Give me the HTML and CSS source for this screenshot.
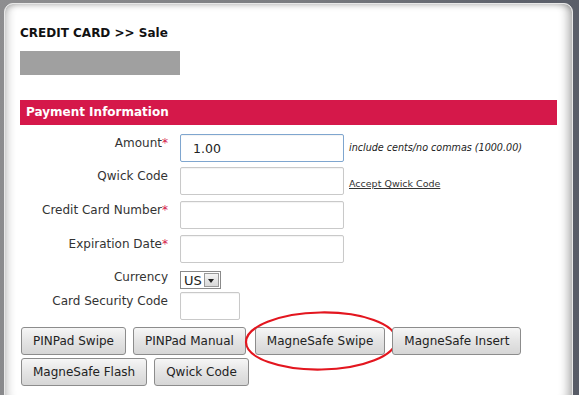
FILE: index.html
```html
<!DOCTYPE html>
<html lang="en">
<head>
    <meta charset="UTF-8">
    <title>Credit Card Sale</title>
    <link rel="stylesheet" href="styles.css">
</head>
<body>

    <div class="card">
        <h1>CREDIT CARD &gt;&gt; Sale</h1>
        <div class="merchant-bar"></div>

        <div class="section-head">Payment Information</div>

        <form class="pay-form">
            <div class="row row-first">
                <label>Amount<span class="req">*</span></label>
                <input type="text" class="field focused" value="1.00">
                <span class="hint">include cents/no commas (1000.00)</span>
            </div>
            <div class="row">
                <label>Qwick Code</label>
                <input type="text" class="field">
                <a href="#" class="hint-link">Accept Qwick Code</a>
            </div>
            <div class="row">
                <label>Credit Card Number<span class="req">*</span></label>
                <input type="text" class="field">
            </div>
            <div class="row">
                <label>Expiration Date<span class="req">*</span></label>
                <input type="text" class="field">
            </div>
            <div class="row row-small">
                <label>Currency</label>
                <div class="select">
                    <span class="select-value">US</span>
                    <span class="select-arrow"></span>
                </div>
            </div>
            <div class="row row-last">
                <label>Card Security Code</label>
                <input type="text" class="field field-short">
            </div>

            <div class="buttons">
                <button type="button">PINPad Swipe</button>
                <button type="button">PINPad Manual</button>
                <button type="button" class="marked">MagneSafe Swipe
                    <svg class="circle" width="156" height="62" viewBox="0 0 156 62">
                        <ellipse cx="78" cy="31" rx="75" ry="28.5" fill="none" stroke="#e3161f" stroke-width="2.2" transform="rotate(-1 78 31)"/>
                    </svg>
                </button>
                <button type="button">MagneSafe Insert</button>
                <button type="button">MagneSafe Flash</button>
                <button type="button">Qwick Code</button>
            </div>
        </form>
    </div>

</body>
</html>
```

FILE: styles.css
```css
* {
    margin: 0;
    padding: 0;
    box-sizing: border-box;
}

body {
    height: 395px;
    overflow: hidden;
    padding: 3px 6px 0 4px;
    background: linear-gradient(100deg, #8e8e90 0%, #7a7c80 45%, #5d616b 80%, #575b66 100%);
    font-family: "DejaVu Sans", Verdana, sans-serif;
    color: #222;
}

.card {
    height: 400px;
    background: #fff;
    border-radius: 9px;
    border: 1px solid #e8e8e8;
    padding: 22px 15px 0 15px;
    box-shadow: inset 0 4px 6px -3px rgba(0, 0, 0, 0.25),
                inset 9px 0 9px -6px rgba(0, 0, 0, 0.2),
                inset -10px 0 10px -6px rgba(0, 0, 0, 0.3);
}

h1 {
    font-size: 12px;
    font-weight: bold;
    color: #111;
    line-height: 15px;
}

.merchant-bar {
    width: 160px;
    height: 24px;
    margin-top: 10px;
    background: #a0a0a0;
}

.section-head {
    margin-top: 25px;
    height: 25px;
    padding: 5px 6px;
    background: #d5184a;
    color: #fff;
    font-size: 12px;
    font-weight: bold;
    line-height: 15px;
}

.pay-form {
    margin-top: 9px;
}

.row {
    display: flex;
    align-items: flex-start;
    height: 28px;
    margin-bottom: 6px;
}

.row-first {
    margin-bottom: 5px;
}

.row label {
    width: 151px;
    padding-top: 2px;
    padding-right: 3px;
    text-align: right;
    font-size: 12px;
    line-height: 15px;
    color: #333;
}

.req {
    color: #d5184a;
}

.field {
    width: 164px;
    height: 28px;
    margin-left: 9px;
    padding: 2px 12px;
    border: 1px solid #c9c9c9;
    border-radius: 2px;
    font-family: inherit;
    font-size: 12.5px;
    color: #222;
    box-shadow: inset 0 1px 1px rgba(0, 0, 0, 0.05);
}

.field.focused {
    border-color: #7fa6cf;
}

.field-short {
    width: 60px;
}

.hint {
    margin-left: 5px;
    padding-top: 8px;
    font-size: 9.6px;
    font-style: italic;
    color: #222;
}

.hint-link {
    margin-left: 5px;
    padding-top: 11px;
    font-size: 9.5px;
    color: #333;
}

.row-small {
    height: 18px;
    margin-top: 2px;
    margin-bottom: 5px;
}

.row-small label {
    padding-top: 1px;
}

.row-last {
    margin-bottom: 7px;
}

.select {
    display: flex;
    align-items: center;
    height: 18px;
    margin-left: 9px;
    margin-top: 2px;
    padding: 1px;
    border: 1px solid #8a8a8a;
    font-size: 13px;
}

.select-value {
    padding: 0 2px;
}

.select-arrow {
    width: 15px;
    height: 14px;
    border: 1px solid #999;
    background: linear-gradient(#f4f4f4, #d8d8d8);
    position: relative;
}

.select-arrow::after {
    content: "";
    position: absolute;
    left: 3px;
    top: 5px;
    border-left: 3.5px solid transparent;
    border-right: 3.5px solid transparent;
    border-top: 4px solid #222;
}

.buttons {
    display: flex;
    flex-wrap: wrap;
    gap: 3px 7px;
    padding-left: 1px;
    width: 520px;
}

.buttons button {
    position: relative;
    height: 28px;
    padding: 0 11px;
    border: 1px solid #8c8c8c;
    border-radius: 3px;
    background: linear-gradient(#f6f6f6, #e4e4e4 50%, #d6d6d6);
    font-family: inherit;
    font-size: 12px;
    color: #222;
    cursor: pointer;
}

.buttons .marked {
    margin-left: 2px;
}

.circle {
    position: absolute;
    left: -13px;
    top: -18px;
    pointer-events: none;
}
```
